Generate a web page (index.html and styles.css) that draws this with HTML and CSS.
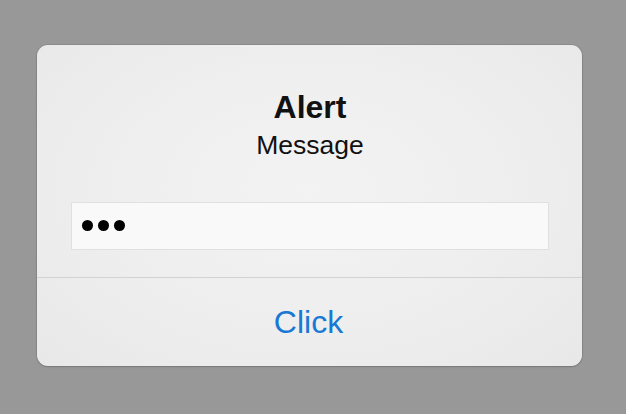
FILE: index.html
```html
<!DOCTYPE html>
<html>
<head>
<meta charset="utf-8">
<link rel="stylesheet" href="styles.css">
</head>
<body>
<div class="alert">
  <div class="alert-body">
    <div class="alert-title">Alert</div>
    <div class="alert-message">Message</div>
    <div class="alert-input">
      <span class="dot"></span><span class="dot"></span><span class="dot"></span>
    </div>
  </div>
  <div class="alert-action">Click</div>
</div>
</body>
</html>
```
FILE: styles.css
```css
html, body {
  margin: 0;
  padding: 0;
}
body {
  background: #989898;
  width: 626px;
  height: 414px;
  overflow: hidden;
  font-family: "Liberation Sans", Arial, sans-serif;
}
.alert {
  margin: 45px 0 0 37px;
  width: 545px;
  height: 321px;
  box-sizing: border-box;
  border-radius: 11px;
  background: radial-gradient(ellipse at 50% 45%, #f3f3f3 0%, #eeeeee 55%, #e8e8e8 100%);
  box-shadow: 0 0 0 1px rgba(0,0,0,0.08), 0 1px 2px rgba(0,0,0,0.15);
  display: flex;
  flex-direction: column;
  overflow: hidden;
}
.alert-body {
  padding: 44px 33px 0 34px;
  height: 233px;
  box-sizing: border-box;
  border-bottom: 1px solid #d2d2d2;
  display: flex;
  flex-direction: column;
  align-items: center;
}
.alert-title {
  font-size: 32px;
  line-height: 36px;
  font-weight: bold;
  color: #111;
}
.alert-message {
  margin-top: 5px;
  font-size: 26.5px;
  line-height: 30px;
  color: #111;
}
.alert-input {
  margin-top: 42px;
  align-self: stretch;
  height: 48px;
  box-sizing: border-box;
  background: #f9f9f9;
  border: 1px solid #e0e0e0;
  display: flex;
  align-items: center;
  gap: 5px;
  padding-left: 10px;
  padding-bottom: 2px;
}
.dot {
  width: 11px;
  height: 11px;
  border-radius: 50%;
  background: #000;
}
.alert-action {
  flex: 1;
  display: flex;
  align-items: center;
  justify-content: center;
  font-size: 32px;
  line-height: 87px;
  color: #1878d6;
  padding-right: 2px;
}
```
